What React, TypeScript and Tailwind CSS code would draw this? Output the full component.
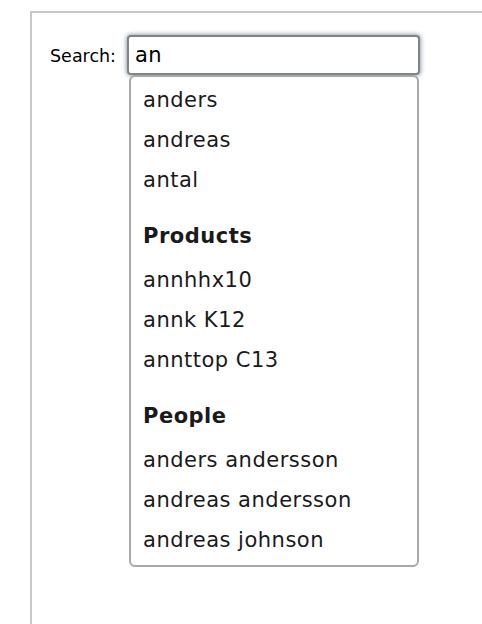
import React from 'react';

type Group = { title?: string; items: string[] };

const groups: Group[] = [
  { items: ['anders', 'andreas', 'antal'] },
  { title: 'Products', items: ['annhhx10', 'annk K12', 'annttop C13'] },
  { title: 'People', items: ['anders andersson', 'andreas andersson', 'andreas johnson'] },
];

export default function App() {
  return (
    <div className="min-h-screen w-full bg-white pl-[30px] pt-[11px] font-['DejaVu_Sans',sans-serif] text-[#1a1a1a]">
      {/* Panel */}
      <div className="min-h-[613px] border-l-2 border-t-2 border-[#c8c8c8] pl-[18px] pt-[22px]">
        <div className="flex items-start gap-[11px]">
          <label className="mt-[9px] text-[17.5px] leading-[24px] text-black">Search:</label>

          <div className="flex w-[293px] flex-col">
            {/* Input */}
            <div className="flex h-[40px] items-center rounded-[4px] border-2 border-[#7c848c] bg-white pl-[6px] pt-[1px] text-[21px] tracking-[0.3px] text-black shadow-[0_0_4px_1px_rgba(90,100,110,0.6)]">
              an
            </div>

            {/* Dropdown */}
            <div className="ml-[2px] mr-[1px] rounded-[6px] border-2 border-[#a8a8a8] bg-white py-[4px] pl-[12px] text-[21px] tracking-[0.5px]">
              {groups.map((g, gi) => (
                <div key={gi}>
                  {g.title && (
                    <div className="mt-[16px] mb-[4px] flex h-[40px] items-center font-bold">{g.title}</div>
                  )}
                  {g.items.map((it) => (
                    <div key={it} className="flex h-[40px] items-center">
                      {it}
                    </div>
                  ))}
                </div>
              ))}
            </div>
          </div>
        </div>
      </div>
    </div>
  );
}
